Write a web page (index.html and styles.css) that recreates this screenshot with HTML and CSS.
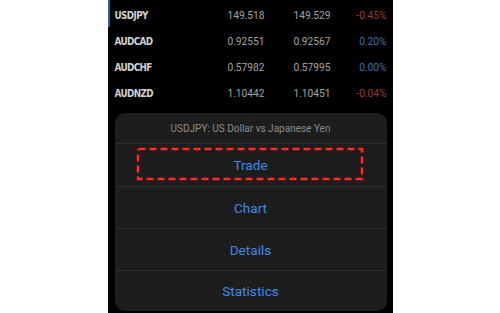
FILE: index.html
```html
<!DOCTYPE html>
<html>
<head>
<meta charset="utf-8">
<link rel="stylesheet" href="styles.css">
</head>
<body>
<div class="phone">
  <div class="quotes">
    <div class="row active">
      <span class="sym">USDJPY</span><span class="num bid">149.518</span><span class="num ask">149.529</span><span class="chg neg">-0.45%</span>
    </div>
    <div class="row">
      <span class="sym">AUDCAD</span><span class="num bid">0.92551</span><span class="num ask">0.92567</span><span class="chg pos">0.20%</span>
    </div>
    <div class="row">
      <span class="sym">AUDCHF</span><span class="num bid">0.57982</span><span class="num ask">0.57995</span><span class="chg pos">0.00%</span>
    </div>
    <div class="row">
      <span class="sym">AUDNZD</span><span class="num bid">1.10442</span><span class="num ask">1.10451</span><span class="chg neg">-0.04%</span>
    </div>
  </div>
  <div class="sheet">
    <div class="sheet-title">USDJPY: US Dollar vs Japanese Yen</div>
    <div class="action first">Trade
      <svg class="highlight" width="228" height="34" viewBox="0 0 228 34">
        <rect x="2" y="2" width="224" height="30" fill="none" stroke="#3a0c0c" stroke-width="4" stroke-dasharray="8 3"/>
        <rect x="2" y="2" width="224" height="30" fill="none" stroke="#f23232" stroke-width="2.4" stroke-dasharray="7 4" stroke-dashoffset="-0.5"/>
      </svg>
    </div>
    <div class="action">Chart</div>
    <div class="action">Details</div>
    <div class="action">Statistics</div>
  </div>
</div>
</body>
</html>
```

FILE: styles.css
```css
html, body {
  margin: 0;
  padding: 0;
  background: #ffffff;
}
body {
  font-family: Roboto, "Liberation Sans", sans-serif;
}
.phone {
  width: 285px;
  height: 313px;
  margin: 0 auto;
  background: #000000;
  display: flex;
  flex-direction: column;
}
.quotes {
  padding-top: 2px;
}
.row {
  position: relative;
  height: 26px;
  display: flex;
  align-items: center;
  padding-left: 7px;
  padding-right: 6px;
}
.row.active::before {
  content: "";
  position: absolute;
  left: 0;
  top: -2px;
  bottom: 1px;
  width: 2px;
  background: #2a5ea8;
}
.sym {
  font-family: "DejaVu Sans Condensed", "DejaVu Sans", sans-serif;
  font-weight: bold;
  font-size: 9.8px;
  color: #d0d0d0;
  width: 60px;
  letter-spacing: -0.6px;
}
.num {
  font-size: 10.2px;
  color: #a4a4a4;
  text-align: right;
}
.bid {
  width: 90px;
}
.ask {
  width: 66px;
}
.chg {
  flex: 1;
  text-align: right;
  font-size: 10.2px;
}
.neg { color: #9e3a34; }
.pos { color: #3572b8; }

.sheet {
  margin: 7px 6px 0 7px;
  background: #1d1d1d;
  border-radius: 10px;
  display: flex;
  flex-direction: column;
}
.sheet-title {
  height: 30px;
  display: flex;
  align-items: center;
  justify-content: center;
  font-size: 10px;
  color: #8c8c8c;
  border-bottom: 1px solid #2e2e2e;
}
.action {
  position: relative;
  height: 41px;
  display: flex;
  align-items: center;
  justify-content: center;
  font-size: 13.6px;
  color: #3f8ae4;
  border-bottom: 1px solid #2e2e2e;
}
.action.first {
  height: 42px;
}
.action:last-child {
  border-bottom: none;
  height: 40px;
}
.highlight {
  position: absolute;
  left: 21px;
  top: 3px;
}
```
